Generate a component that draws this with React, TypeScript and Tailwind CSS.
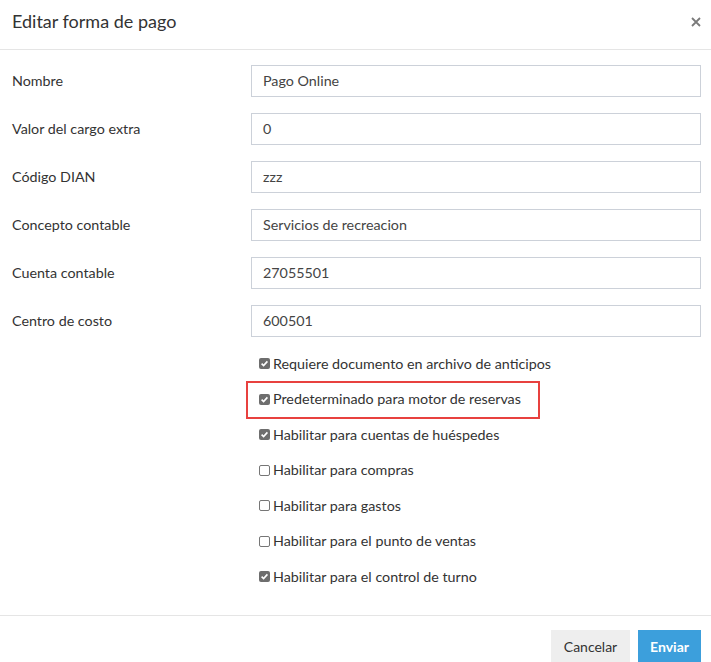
import React from "react";

const fields = [
  ["Nombre", "Pago Online"],
  ["Valor del cargo extra", "0"],
  ["Código DIAN", "zzz"],
  ["Concepto contable", "Servicios de recreacion"],
  ["Cuenta contable", "27055501"],
  ["Centro de costo", "600501"],
];

const checks: [string, boolean, boolean?][] = [
  ["Requiere documento en archivo de anticipos", true],
  ["Predeterminado para motor de reservas", true, true],
  ["Habilitar para cuentas de huéspedes", true],
  ["Habilitar para compras", false],
  ["Habilitar para gastos", false],
  ["Habilitar para el punto de ventas", false],
  ["Habilitar para el control de turno", true],
];

function Box({ checked }: { checked: boolean }) {
  if (checked) {
    return (
      <span className="w-[11px] h-[11px] rounded-[2px] bg-[#6e6e6e] flex items-center justify-center shrink-0">
        <svg width="9" height="9" viewBox="0 0 9 9">
          <path d="M1.6 4.6 L3.6 6.6 L7.4 2.4" fill="none" stroke="#fff" strokeWidth="1.6" />
        </svg>
      </span>
    );
  }
  return <span className="w-[11px] h-[11px] rounded-[2px] border border-[#767676] bg-white shrink-0" />;
}

export default function App() {
  return (
    <div className="w-[711px] h-[662px] bg-white overflow-hidden text-[#333] font-['Lato',sans-serif]">
      <div className="h-[50px] border-b border-[#e5e5e5] flex items-start justify-between pl-[12px] pr-[10px] pt-[9px]">
        <div className="text-[18px] leading-[24px] text-[#333]">Editar forma de pago</div>
        <svg width="10" height="10" viewBox="0 0 10 10" className="mt-[8px]">
          <path d="M1 1 L9 9 M9 1 L1 9" stroke="#7a7a7a" strokeWidth="1.8" />
        </svg>
      </div>
      <div className="pt-[15px] pl-[12px] pr-[10px]">
        {fields.map(([label, value]) => (
          <div key={label} className="flex items-center mb-[16px] h-[32px]">
            <div className="w-[239px] text-[14.3px]">{label}</div>
            <div className="flex-1 h-[32px] border border-[#ccd1d9] flex items-center px-[11px] text-[14.3px] text-[#444]">
              {value}
            </div>
          </div>
        ))}
        <div className="pl-[247px] -mt-[7px]">
          {checks.map(([label, checked, boxed]) => (
            <div key={label} className="relative h-[35.5px] flex items-center gap-[3px] text-[14.3px]">
              <Box checked={checked} />
              <span className="leading-[20px]">{label}</span>
              {boxed && (
                <span className="absolute left-[-13px] top-[-1px] w-[294px] h-[38px] border-2 border-[#e8413f] pointer-events-none" />
              )}
            </div>
          ))}
        </div>
      </div>
      <div className="mt-[20px] border-t border-[#e5e5e5] pt-[14px] pr-[10px] flex justify-end gap-[8px]">
        <button className="w-[79px] h-[34px] bg-[#eeeeee] text-[14px] text-[#333] font-['Lato',sans-serif]">Cancelar</button>
        <button className="w-[63px] h-[34px] bg-[#3c9fdc] text-[14px] text-white font-bold font-['Lato',sans-serif]">Enviar</button>
      </div>
    </div>
  );
}
